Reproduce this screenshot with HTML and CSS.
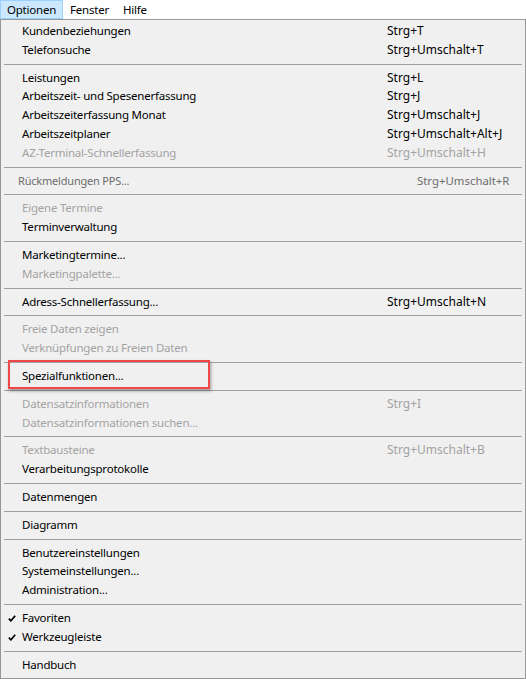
FILE: index.html
```html
<!DOCTYPE html>
<html lang="de">
<head>
<meta charset="utf-8">
<title>Optionen</title>
<link rel="stylesheet" href="styles.css">
</head>
<body>
<div class="menubar">
  <div class="top-item active">Optionen</div>
  <div class="top-item">Fenster</div>
  <div class="top-item">Hilfe</div>
</div>
<div class="dropdown">
  <div class="item"><span></span><span>Kundenbeziehungen</span><span>Strg+T</span></div>
  <div class="item"><span></span><span>Telefonsuche</span><span>Strg+Umschalt+T</span></div>
  <div class="sep"></div>
  <div class="item"><span></span><span>Leistungen</span><span>Strg+L</span></div>
  <div class="item"><span></span><span>Arbeitszeit- und Spesenerfassung</span><span>Strg+J</span></div>
  <div class="item"><span></span><span>Arbeitszeiterfassung Monat</span><span>Strg+Umschalt+J</span></div>
  <div class="item"><span></span><span>Arbeitszeitplaner</span><span>Strg+Umschalt+Alt+J</span></div>
  <div class="item disabled"><span></span><span>AZ-Terminal-Schnellerfassung</span><span>Strg+Umschalt+H</span></div>
  <div class="sep"></div>
  <div class="item alt"><span></span><span>Rückmeldungen PPS...</span><span>Strg+Umschalt+R</span></div>
  <div class="sep"></div>
  <div class="item disabled"><span></span><span>Eigene Termine</span><span></span></div>
  <div class="item"><span></span><span>Terminverwaltung</span><span></span></div>
  <div class="sep"></div>
  <div class="item"><span></span><span>Marketingtermine...</span><span></span></div>
  <div class="item disabled"><span></span><span>Marketingpalette...</span><span></span></div>
  <div class="sep"></div>
  <div class="item"><span></span><span>Adress-Schnellerfassung...</span><span>Strg+Umschalt+N</span></div>
  <div class="sep"></div>
  <div class="item disabled"><span></span><span>Freie Daten zeigen</span><span></span></div>
  <div class="item disabled"><span></span><span>Verknüpfungen zu Freien Daten</span><span></span></div>
  <div class="sep"></div>
  <div class="item marked"><span></span><span>Spezialfunktionen...</span><span></span></div>
  <div class="sep"></div>
  <div class="item disabled"><span></span><span>Datensatzinformationen</span><span>Strg+I</span></div>
  <div class="item disabled"><span></span><span>Datensatzinformationen suchen...</span><span></span></div>
  <div class="sep"></div>
  <div class="item disabled"><span></span><span>Textbausteine</span><span>Strg+Umschalt+B</span></div>
  <div class="item"><span></span><span>Verarbeitungsprotokolle</span><span></span></div>
  <div class="sep"></div>
  <div class="item"><span></span><span>Datenmengen</span><span></span></div>
  <div class="sep"></div>
  <div class="item"><span></span><span>Diagramm</span><span></span></div>
  <div class="sep"></div>
  <div class="item"><span></span><span>Benutzereinstellungen</span><span></span></div>
  <div class="item"><span></span><span>Systemeinstellungen...</span><span></span></div>
  <div class="item"><span></span><span>Administration...</span><span></span></div>
  <div class="sep"></div>
  <div class="item"><span class="check"><svg width="8" height="7" viewBox="0 0 8 7"><path d="M0.8 3.6 L2.9 5.8 L7.2 0.8" fill="none" stroke="#000" stroke-width="1.7"/></svg></span><span>Favoriten</span><span></span></div>
  <div class="item"><span class="check"><svg width="8" height="7" viewBox="0 0 8 7"><path d="M0.8 3.6 L2.9 5.8 L7.2 0.8" fill="none" stroke="#000" stroke-width="1.7"/></svg></span><span>Werkzeugleiste</span><span></span></div>
  <div class="sep"></div>
  <div class="item"><span></span><span>Handbuch</span><span></span></div>
</div>
</body>
</html>
```

FILE: styles.css
```css
html, body {
  margin: 0;
  padding: 0;
  background: #ffffff;
  overflow: hidden;
}

body {
  width: 526px;
  height: 679px;
  font-family: "Segoe UI", "Noto Sans", "Open Sans", sans-serif;
  font-size: 12px;
  color: #000;
}

.menubar {
  display: flex;
  height: 19px;
  background: #ffffff;
}

.top-item {
  height: 17px;
  line-height: 17px;
  padding: 0 6px;
  border: 1px solid transparent;
  font-size: 11.5px;
  letter-spacing: -0.22px;
}

.top-item.active {
  background: #cce8ff;
  border-color: #99d1ff;
}

.dropdown {
  box-sizing: border-box;
  width: 526px;
  height: 660px;
  border: 1px solid #979797;
  background: #f0f0f0;
  padding-top: 2px;
}

.item {
  position: relative;
  display: grid;
  grid-template-columns: 21px 365px auto;
  height: 18.8px;
  line-height: 18.8px;
  white-space: nowrap;
}

.item > span:nth-child(2) {
  font-size: 11.5px;
  letter-spacing: -0.22px;
}

.item.disabled {
  color: #a3a3a3;
}

.item.alt {
  grid-template-columns: 17px 399px auto;
  font-size: 11.4px;
  color: #6d6d6d;
}

.item.alt > span:nth-child(2) {
  font-size: 11px;
  letter-spacing: -0.2px;
}

.check {
  display: flex;
  align-items: center;
  justify-content: center;
  padding-left: 1px;
}

.check svg {
  display: block;
}

.sep {
  height: 1px;
  margin: 4px 3px;
  background: #a0a0a0;
}

.item.marked::after {
  content: "";
  position: absolute;
  left: 7px;
  top: -7px;
  width: 198px;
  height: 25px;
  border: 2px solid #f04848;
  box-shadow: 1px 2px 3px rgba(0, 0, 0, 0.35);
}
```
